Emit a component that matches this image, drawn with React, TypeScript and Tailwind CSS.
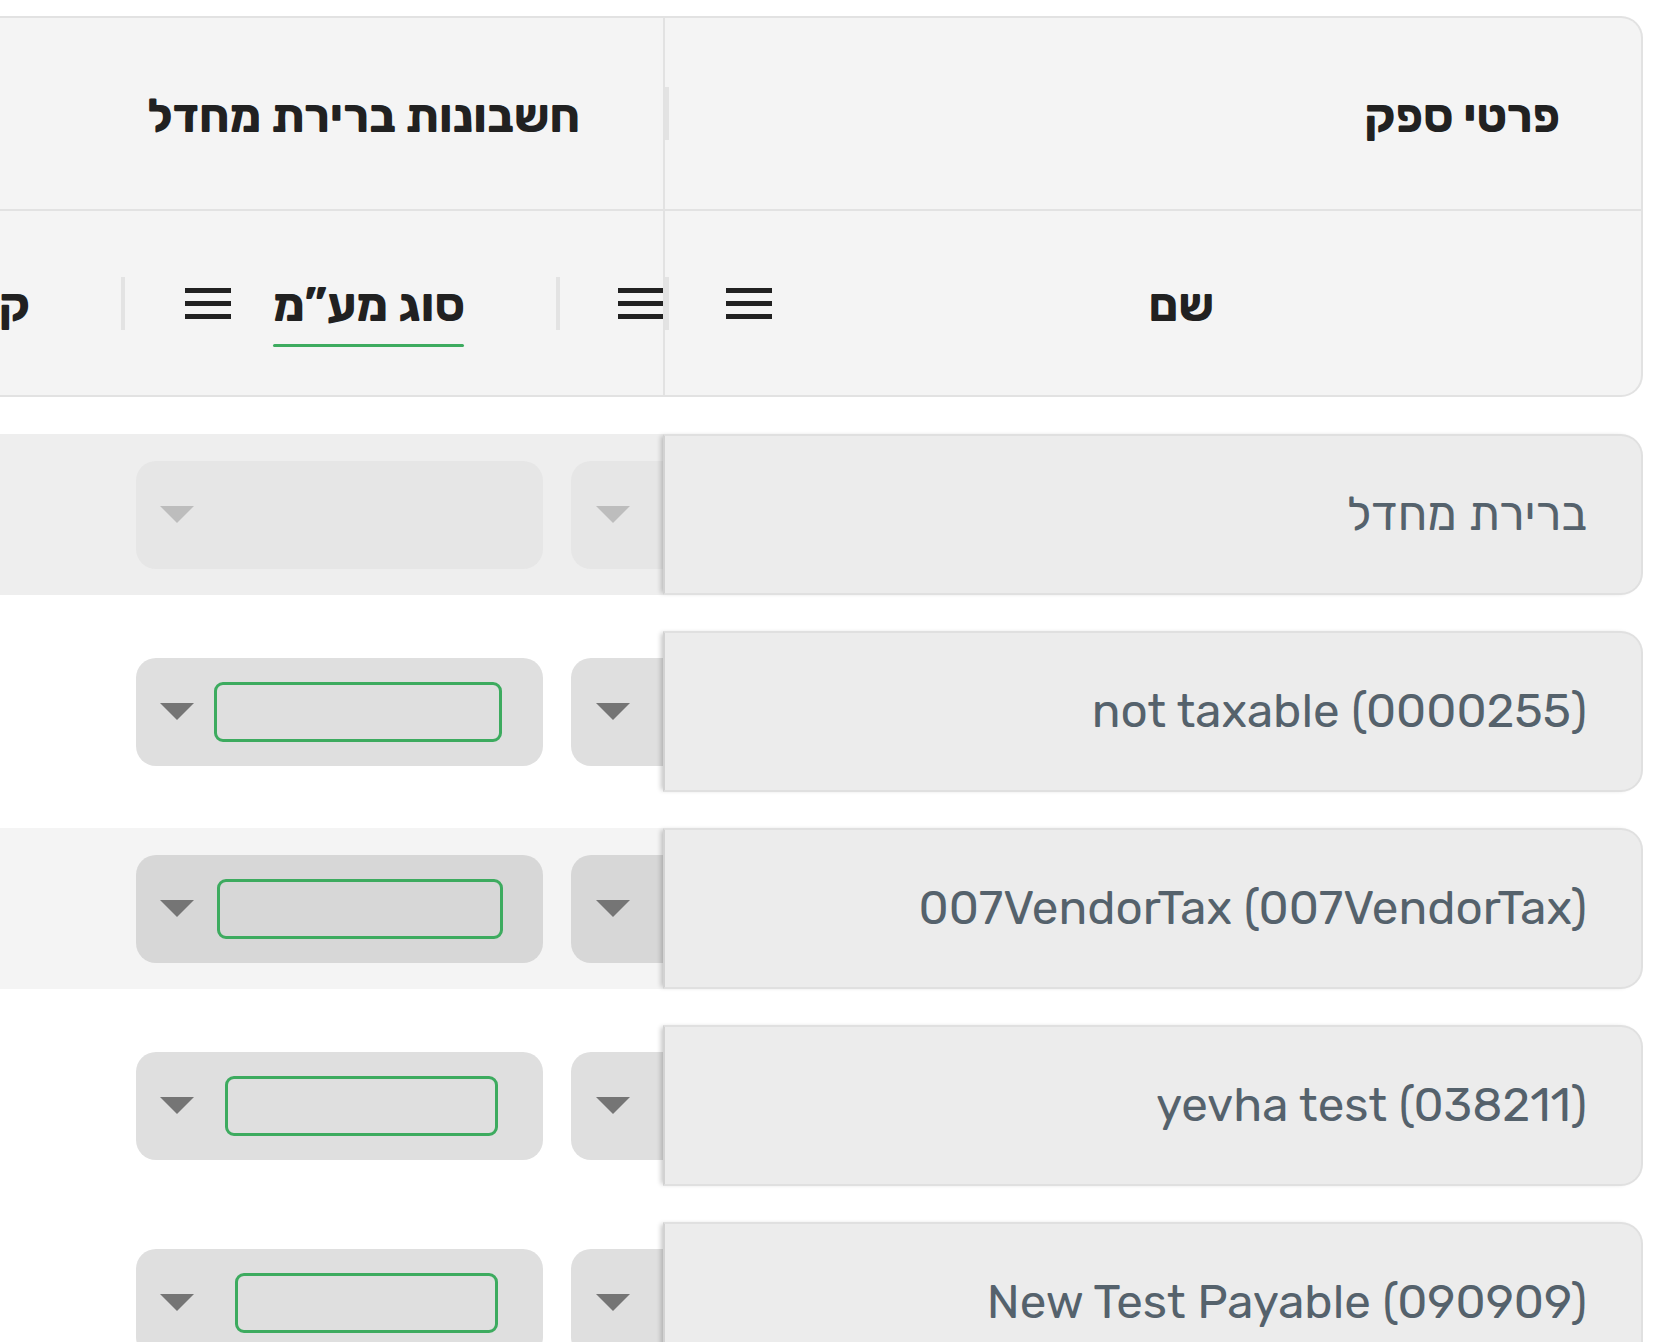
import React from 'react';

const Menu = () => (
  <svg width="46" height="32" viewBox="0 0 46 32" className="shrink-0">
    <rect x="0" y="1" width="46" height="5" fill="#212121" />
    <rect x="0" y="14" width="46" height="5" fill="#212121" />
    <rect x="0" y="27" width="46" height="5" fill="#212121" />
  </svg>
);

const Caret = ({ light }: { light?: boolean }) => (
  <svg width="34" height="17" viewBox="0 0 34 17" className="shrink-0">
    <path d="M0 0 L34 0 L17 17 Z" fill={light ? '#bdbdbd' : '#757575'} />
  </svg>
);

const Handle = () => <div className="w-[4px] h-[53px] bg-[#e3e3e3] shrink-0" />;

type Row = {
  name: string;
  rowBg: string;
  boxBg: string;
  disabled?: boolean;
  field?: [number, number];
};

const rows: Row[] = [
  { name: 'ברירת מחדל', rowBg: 'bg-[#eeeeee]', boxBg: 'bg-[#e6e6e6]', disabled: true },
  { name: 'not taxable (0000255)', rowBg: 'bg-white', boxBg: 'bg-[#dfdfdf]', field: [78, 288] },
  { name: '007VendorTax (007VendorTax)', rowBg: 'bg-[#f4f4f4]', boxBg: 'bg-[#d7d7d7]', field: [81, 286] },
  { name: 'yevha test (038211)', rowBg: 'bg-white', boxBg: 'bg-[#dfdfdf]', field: [89, 273] },
  { name: 'New Test Payable (090909)', rowBg: 'bg-white', boxBg: 'bg-[#dfdfdf]', field: [99, 263] },
];

export default function App() {
  return (
    <div
      className="w-[1679px] h-[1342px] bg-white overflow-hidden"
      style={{ fontFamily: 'Rubik, Inter, "Open Sans", "Liberation Sans", sans-serif' }}
    >
      {/* header */}
      <div className="mt-[16px] w-[1643px] h-[381px] flex flex-col bg-[#f4f4f4] border-y-2 border-r-2 border-[#e2e2e2] rounded-r-[22px] overflow-hidden">
        <div className="h-[193px] flex border-b-2 border-[#e2e2e2]">
          <div className="w-[663px] shrink-0 flex items-center justify-end pr-[83px] pt-[6px]">
            <span className="text-[47px] font-bold text-[#212121] whitespace-nowrap" dir="rtl">חשבונות ברירת מחדל</span>
          </div>
          <div className="flex-1 flex items-center border-l-2 border-[#e2e2e2]">
            <Handle />
            <div className="flex-1 flex justify-end pr-[81px] pt-[6px]">
              <span className="text-[47px] font-bold text-[#212121] whitespace-nowrap" dir="rtl">פרטי ספק</span>
            </div>
          </div>
        </div>
        <div className="flex-1 flex">
          {/* column C (cut off at the left edge) */}
          <div className="w-[125px] shrink-0 flex items-center">
            <div className="w-[121px] overflow-hidden pt-[4px]">
              <div className="pr-[91px] text-right whitespace-nowrap text-[47px] font-bold text-[#212121]" dir="rtl">
                קוד
              </div>
            </div>
            <Handle />
          </div>
          {/* column B */}
          <div className="w-[435px] shrink-0 flex items-center">
            <div className="w-[60px] shrink-0" />
            <Menu />
            <div className="ml-[42px] flex flex-col items-center pt-[22px]">
              <span className="text-[47px] font-bold text-[#212121] leading-none whitespace-nowrap" dir="rtl">סוג מע”מ</span>
              <div className="mt-[15px] w-[191px] h-[3px] rounded-full bg-[#3dab5f]" />
            </div>
            <div className="flex-1" />
            <Handle />
          </div>
          {/* column A (mostly hidden under the pinned column) */}
          <div className="w-[103px] shrink-0 flex items-center overflow-hidden">
            <div className="ml-[58px]">
              <Menu />
            </div>
          </div>
          {/* pinned column */}
          <div className="flex-1 flex items-center border-l-2 border-[#e2e2e2]">
            <Handle />
            <div className="ml-[57px]">
              <Menu />
            </div>
            <div className="flex-1 flex justify-end pr-[427px] pt-[4px]">
              <span className="text-[47px] font-bold text-[#212121]" dir="rtl">שם</span>
            </div>
          </div>
        </div>
      </div>

      {/* body rows */}
      <div className="mt-[37px] flex flex-col gap-[36px]">
        {rows.map((r, i) => (
          <div key={i} className="h-[161px] flex shrink-0">
            <div className={`w-[663px] shrink-0 flex items-center ${r.rowBg}`}>
              <div className="w-[136px] shrink-0" />
              <div className={`w-[407px] h-[108px] shrink-0 rounded-[20px] ${r.boxBg} flex items-center`}>
                <div className="ml-[24px]">
                  <Caret light={r.disabled} />
                </div>
                {r.field && (
                  <div
                    className="h-[60px] border-[3px] border-[#3dab5f] rounded-[9px]"
                    style={{ marginLeft: r.field[0] - 58, width: r.field[1] }}
                  />
                )}
              </div>
              <div className={`ml-[28px] flex-1 h-[108px] rounded-l-[20px] ${r.boxBg} flex items-center`}>
                <div className="ml-[25px]">
                  <Caret light={r.disabled} />
                </div>
              </div>
            </div>
            <div className="w-[980px] shrink-0 bg-[#ececec] border-2 border-[#e0e0e0] border-l-[#d2d2d2] rounded-r-[22px] shadow-[-4px_0_5px_-2px_rgba(0,0,0,0.22)] flex items-center justify-end pr-[54px]">
              <span className="text-[47.5px] text-[#55626c] whitespace-nowrap" dir="auto">{r.name}</span>
            </div>
          </div>
        ))}
      </div>
    </div>
  );
}
